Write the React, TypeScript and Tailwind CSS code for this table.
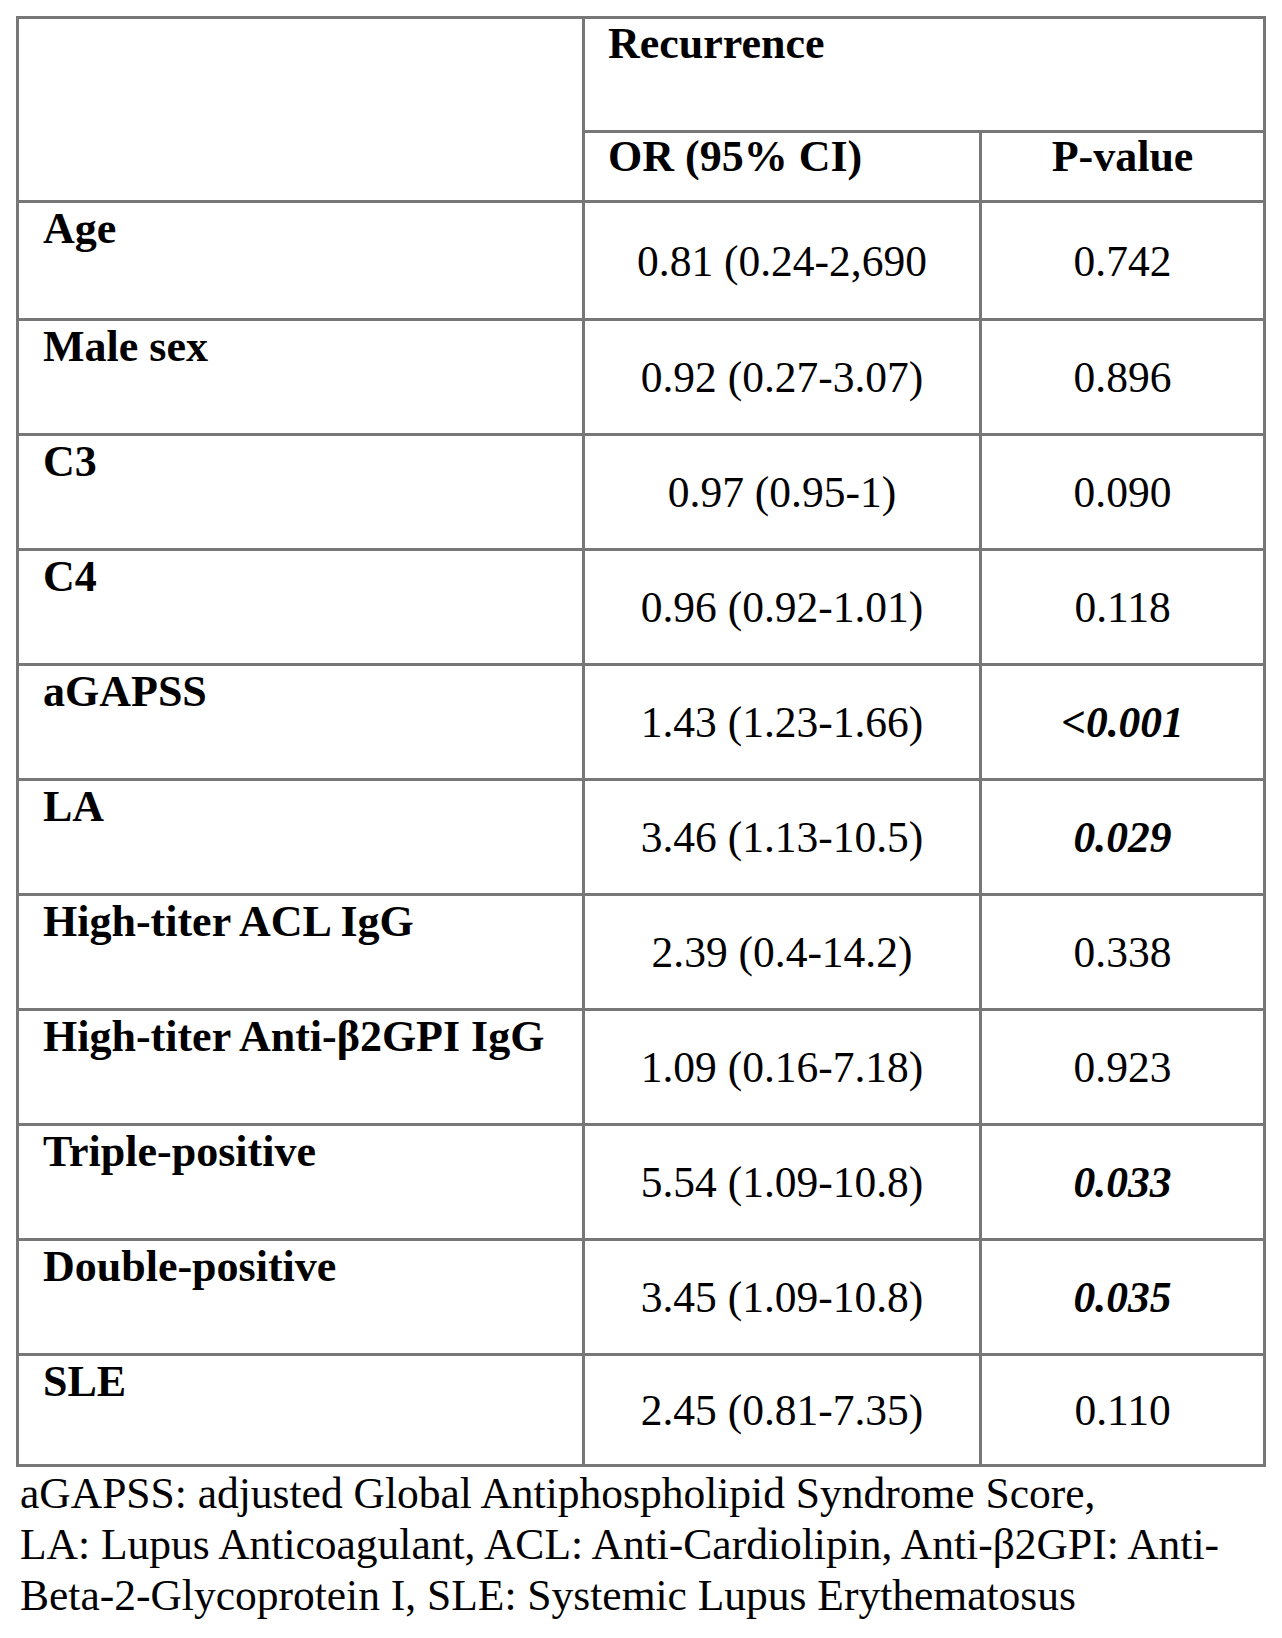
type Row = {
  label: string;
  or: string;
  p: string;
  significant?: boolean;
  height: string;
};

const rows: Row[] = [
  { label: 'Age', or: '0.81 (0.24-2,690', p: '0.742', height: 'h-[118px]' },
  { label: 'Male sex', or: '0.92 (0.27-3.07)', p: '0.896', height: 'h-[115px]' },
  { label: 'C3', or: '0.97 (0.95-1)', p: '0.090', height: 'h-[115px]' },
  { label: 'C4', or: '0.96 (0.92-1.01)', p: '0.118', height: 'h-[115px]' },
  { label: 'aGAPSS', or: '1.43 (1.23-1.66)', p: '<0.001', significant: true, height: 'h-[115px]' },
  { label: 'LA', or: '3.46 (1.13-10.5)', p: '0.029', significant: true, height: 'h-[115px]' },
  { label: 'High-titer ACL IgG', or: '2.39 (0.4-14.2)', p: '0.338', height: 'h-[115px]' },
  { label: 'High-titer Anti-β2GPI IgG', or: '1.09 (0.16-7.18)', p: '0.923', height: 'h-[115px]' },
  { label: 'Triple-positive', or: '5.54 (1.09-10.8)', p: '0.033', significant: true, height: 'h-[115px]' },
  { label: 'Double-positive', or: '3.45 (1.09-10.8)', p: '0.035', significant: true, height: 'h-[115px]' },
  { label: 'SLE', or: '2.45 (0.81-7.35)', p: '0.110', height: 'h-[111px]' },
];

const cell = 'border-r-[3px] border-b-[3px] border-[#777777] p-0';

export default function App() {
  return (
    <div className="min-h-screen w-[1282px] bg-white pt-[16px] text-black [font-family:'Liberation_Serif','Times_New_Roman',serif]">
      <table className="ml-[16px] w-[1250px] table-fixed border-separate border-spacing-0 border-t-[3px] border-l-[3px] border-[#777777] text-[43.5px] leading-[48px]">
        <colgroup>
          <col className="w-[566px]" />
          <col className="w-[397px]" />
          <col className="w-[284px]" />
        </colgroup>
        <thead>
          <tr>
            <th rowSpan={2} className={cell} />
            <th
              colSpan={2}
              className={`${cell} h-[114px] pt-[1px] pl-[23px] text-left align-top text-[44px] font-bold`}
            >
              Recurrence
            </th>
          </tr>
          <tr>
            <th className={`${cell} h-[70px] pt-0 pl-[23px] text-left align-top text-[44px] font-bold`}>
              OR (95% CI)
            </th>
            <th className={`${cell} h-[70px] pt-0 text-center align-top text-[44px] font-bold`}>P-value</th>
          </tr>
        </thead>
        <tbody>
          {rows.map((row) => (
            <tr key={row.label}>
              <td
                className={`${cell} ${row.height} pt-[2px] pl-[24px] align-top text-[44px] font-bold whitespace-nowrap`}
              >
                {row.label}
              </td>
              <td className={`${cell} ${row.height} text-center align-middle`}>{row.or}</td>
              <td
                className={`${cell} ${row.height} text-center align-middle ${
                  row.significant ? 'font-bold italic' : ''
                }`}
              >
                {row.p}
              </td>
            </tr>
          ))}
        </tbody>
      </table>

      {/* Abbreviations */}
      <p className="mt-[1px] pl-[20px] text-[43.5px] leading-[51px] whitespace-nowrap">
        aGAPSS: adjusted Global Antiphospholipid Syndrome Score,
        <br />
        LA: Lupus Anticoagulant, ACL: Anti-Cardiolipin, Anti-β2GPI: Anti-
        <br />
        Beta-2-Glycoprotein I, SLE: Systemic Lupus Erythematosus
      </p>
    </div>
  );
}
